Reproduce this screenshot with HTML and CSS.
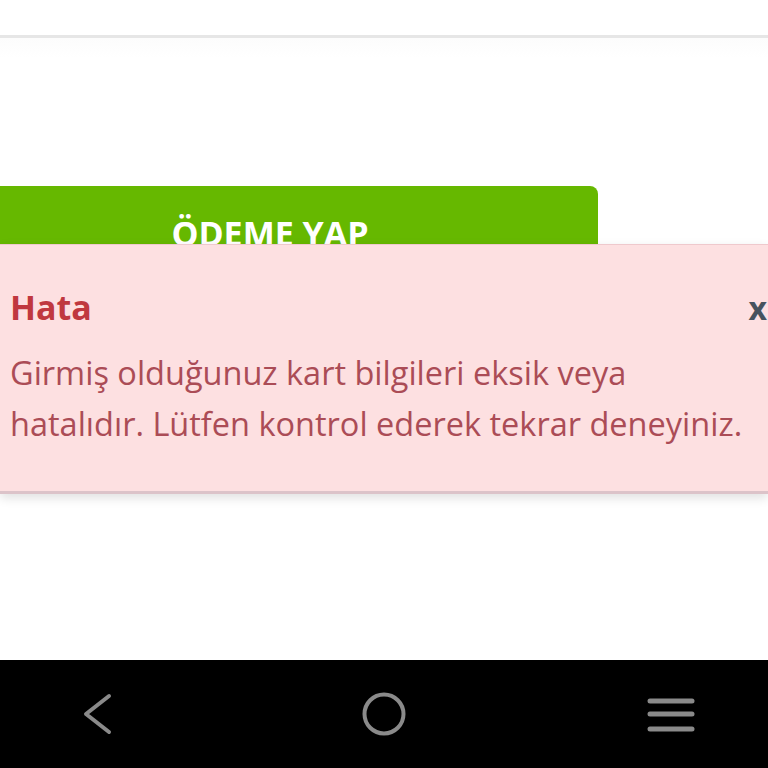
FILE: index.html
```html
<!DOCTYPE html>
<html lang="tr">
<head>
    <meta charset="UTF-8">
    <meta name="viewport" content="width=device-width, initial-scale=1.0">
    <title>Ödeme</title>
    <link rel="stylesheet" href="styles.css">
</head>
<body>
    <div class="top-bar"></div>

    <main class="content">
        <button type="submit" class="pay-button">ÖDEME YAP</button>
    </main>

    <!-- error toast that sits over the form -->
    <div class="alert" role="alert">
        <div class="alert-head">
            <h3>Hata</h3>
            <span class="alert-close">x</span>
        </div>
        <p>Girmiş olduğunuz kart bilgileri eksik veya hatalıdır. Lütfen kontrol ederek tekrar deneyiniz.</p>
    </div>

    <nav class="nav-bar">
        <svg width="50" height="50" viewBox="0 0 50 50">
            <polyline points="37,7 14,25 37,43" fill="none" stroke="#8a8a8a" stroke-width="4" stroke-linecap="round" stroke-linejoin="round"/>
        </svg>
        <svg width="50" height="50" viewBox="0 0 50 50">
            <circle cx="25" cy="25" r="19.5" fill="none" stroke="#8a8a8a" stroke-width="4"/>
        </svg>
        <svg width="50" height="50" viewBox="0 0 50 50">
            <line x1="5" y1="12" x2="47" y2="12" stroke="#8a8a8a" stroke-width="5" stroke-linecap="round"/>
            <line x1="5" y1="25" x2="47" y2="25" stroke="#8a8a8a" stroke-width="5" stroke-linecap="round"/>
            <line x1="5" y1="40" x2="47" y2="40" stroke="#8a8a8a" stroke-width="5" stroke-linecap="round"/>
        </svg>
    </nav>
</body>
</html>
```

FILE: styles.css
```css
body {
    margin: 0;
    height: 768px;
    display: flex;
    flex-direction: column;
    background: #fff;
    font-family: "Open Sans", "Noto Sans", sans-serif;
    position: relative;
    overflow: hidden;
}

.top-bar {
    height: 35px;
    border-bottom: 3px solid #e6e6e6;
}

.content {
    flex: 1;
    padding-top: 148px;
    background: linear-gradient(#fcfcfc, #fff 20px);
}

.pay-button {
    display: block;
    width: 598px;
    padding: 27px 58px 22px 0;
    border: none;
    border-radius: 0 8px 0 0;
    background-color: #66b800;
    color: #fff;
    font-family: inherit;
    font-size: 34px;
    font-weight: bold;
    line-height: 40px;
    text-align: center;
}

/* toast over the page */
.alert {
    position: absolute;
    top: 244px;
    left: 0;
    right: 0;
    height: 250px;
    box-sizing: border-box;
    padding: 40px 0 0 10px;
    background: #fde0e1;
    border-top: 1px solid #efc9cd;
    border-bottom: 3px solid #dcc3c9;
    box-shadow: 0 4px 10px rgba(0, 0, 0, 0.12);
}

.alert-head {
    display: flex;
    justify-content: space-between;
    align-items: baseline;
}

.alert h3 {
    margin: 0;
    font-size: 34px;
    line-height: 44px;
    color: #c0383f;
}

.alert-close {
    font-size: 32px;
    font-weight: bold;
    color: #47535e;
    margin-right: 1px;
}

.alert p {
    margin: 18px 0 0;
    font-size: 32.5px;
    line-height: 51px;
    color: #ab4c56;
}

.nav-bar {
    height: 108px;
    background: #000;
    display: flex;
    justify-content: space-between;
    align-items: center;
    padding: 0 73px 0 72px;
}
```
